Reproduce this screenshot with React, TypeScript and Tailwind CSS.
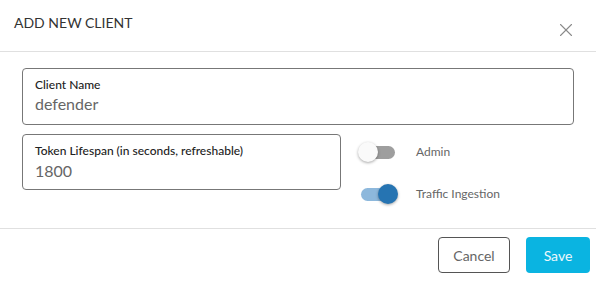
import { X } from 'lucide-react';

function Toggle({ on, label }: { on: boolean; label: string }) {
  return (
    <div className="flex items-center h-[20px]">
      <div className="relative w-[40px] h-[20px]">
        <div
          className={`absolute left-[3px] top-[4px] w-[34px] h-[13px] rounded-full ${
            on ? 'bg-[#8db8dc]' : 'bg-[#9e9e9e]'
          }`}
        />
        <div
          className={`absolute top-0 w-[20px] h-[20px] rounded-full shadow-[0_1px_3px_rgba(0,0,0,0.35)] ${
            on ? 'left-[20px] bg-[#2674b2]' : 'left-0 bg-[#fafafa]'
          }`}
        />
      </div>
      <span className="ml-[18px] text-[12px] text-[#666]">{label}</span>
    </div>
  );
}

export default function App() {
  return (
    <div className="w-[596px] h-[282px] bg-white font-['Lato',sans-serif] text-[#333]">
      <div className="flex justify-between h-[52px] border-b border-[#e0e0e0]">
        <h1 className="pl-[14px] pt-[14px] text-[14px] leading-[18px] text-[#333]">ADD NEW CLIENT</h1>
        <button className="pr-[19px] pt-[19px] h-fit text-[#8a8a8a]">
          <X size={22} strokeWidth={1.2} />
        </button>
      </div>

      <div className="px-[22px] pt-[16px] h-[177px] border-b border-[#e0e0e0] flex flex-col gap-[9px]">
        <div className="w-[552px] h-[57px] border border-[#777] rounded-[4px] px-[12px] pt-[8px]">
          <div className="text-[12px] leading-[16px] font-medium text-[#222]">Client Name</div>
          <div className="text-[16px] leading-[20px] text-[#666] mt-[1px]">defender</div>
        </div>
        <div className="flex">
          <div className="w-[319px] h-[56px] border border-[#777] rounded-[4px] px-[12px] pt-[8px]">
            <div className="text-[12px] leading-[16px] font-medium text-[#222]">Token Lifespan (in seconds, refreshable)</div>
            <div className="text-[16px] leading-[20px] text-[#666] mt-[2px]">1800</div>
          </div>
          <div className="ml-[17px] pt-[8px] flex flex-col gap-[22px]">
            <Toggle on={false} label="Admin" />
            <Toggle on={true} label="Traffic Ingestion" />
          </div>
        </div>
      </div>

      <div className="flex justify-end gap-[16px] pr-[6px] pt-[8px]">
        <button className="w-[72px] h-[36px] border border-[#555] rounded-[4px] text-[14px] text-[#666]">Cancel</button>
        <button className="w-[64px] h-[36px] rounded-[4px] bg-[#0ab4e1] text-[14px] text-[#eef8fc]">Save</button>
      </div>
    </div>
  );
}
